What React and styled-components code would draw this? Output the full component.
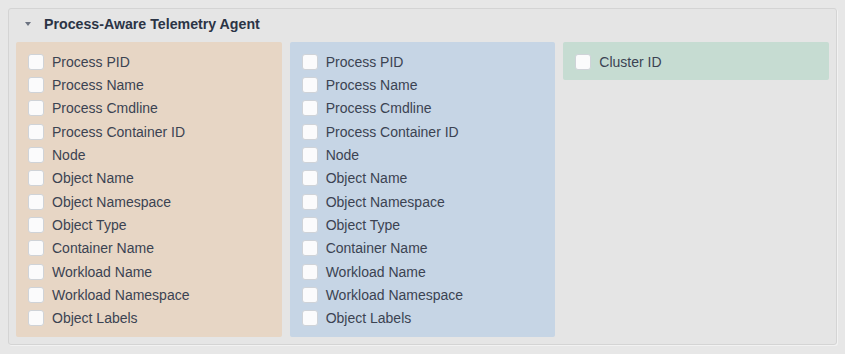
import React from "react"
import styled, { createGlobalStyle } from "styled-components"

const GlobalStyle = createGlobalStyle`
  html, body {
    margin: 0;
    padding: 0;
    background: #e7e7e7;
    font-family: "Liberation Sans", Arial, sans-serif;
  }
`

const Panel = styled.section`
  margin: 8px;
  width: 829px;
  border: 1px solid #d4d4d4;
  border-radius: 3px;
  background: #e5e5e5;
  box-shadow: 1px 1px 0 #f2f2f2;
  padding: 0 7px 7px 7px;
  box-sizing: border-box;
`

const PanelHeader = styled.header`
  display: flex;
  align-items: center;
  height: 33px;
  box-sizing: border-box;
  padding: 0 0 4px 9px;
  .caret {
    width: 0;
    height: 0;
    border-left: 3px solid transparent;
    border-right: 3px solid transparent;
    border-top: 4px solid #6b7280;
    margin-right: 13px;
    margin-top: 1px;
  }
  h3 {
    margin: 0;
    font-size: 14.2px;
    font-weight: 700;
    color: #2b3445;
  }
`

const Columns = styled.div`
  display: grid;
  grid-template-columns: repeat(3, 1fr);
  gap: 8px;
  align-items: start;
`

const Column = styled.ul`
  list-style: none;
  margin: 0;
  padding: 8px 12px 7px 12px;
  border-radius: 2px;
  background: ${(p) => p.$bg};
`

const Row = styled.li`
  display: flex;
  align-items: center;
  height: 23.33px;
  font-size: 14px;
  color: #3b4352;
  .box {
    width: 14px;
    height: 14px;
    border: 1px solid #cfd3d8;
    border-radius: 3px;
    background: #fbfbfc;
    margin-right: 8px;
    flex-shrink: 0;
  }
`

const fields = [
  "Process PID",
  "Process Name",
  "Process Cmdline",
  "Process Container ID",
  "Node",
  "Object Name",
  "Object Namespace",
  "Object Type",
  "Container Name",
  "Workload Name",
  "Workload Namespace",
  "Object Labels",
]

const groups = [
  { bg: "#e7d6c5", items: fields },
  { bg: "#c6d5e5", items: fields },
  { bg: "#c6dcd2", items: ["Cluster ID"] },
]

const App = () => {
  return (
    <>
      <GlobalStyle />
      <Panel>
        <PanelHeader>
          <span className="caret" />
          <h3>Process-Aware Telemetry Agent</h3>
        </PanelHeader>
        <Columns>
          {groups.map((g, i) => (
            <Column key={i} $bg={g.bg}>
              {g.items.map((label) => (
                <Row key={label}>
                  <span className="box" />
                  {label}
                </Row>
              ))}
            </Column>
          ))}
        </Columns>
      </Panel>
    </>
  )
}

export default App
